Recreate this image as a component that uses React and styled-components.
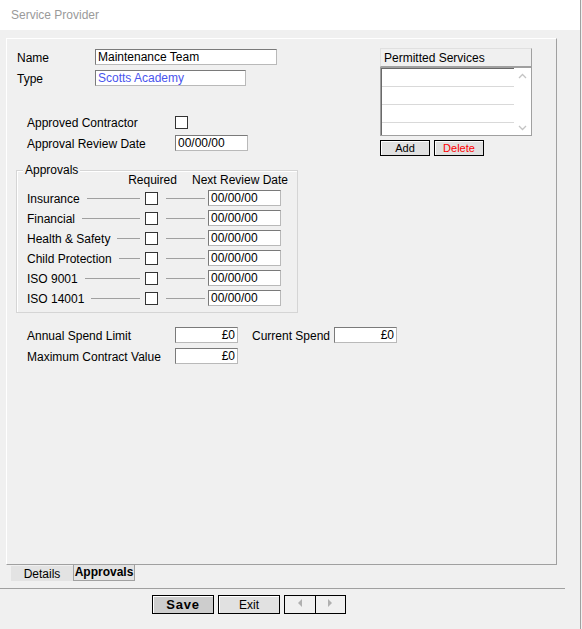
import React from 'react';
import styled, { createGlobalStyle } from 'styled-components';

const GlobalStyle = createGlobalStyle`
  body {
    margin: 0;
    background: #f0f0f0;
    font-family: "Liberation Sans", Arial, sans-serif;
    font-size: 12px;
    color: #000;
  }
`;

const Window = styled.div`
  width: 580px;
  height: 629px;
  border-right: 1px solid #a0a0a0;
  background: #f0f0f0;
  display: flex;
  flex-direction: column;
`;

const TitleBar = styled.div`
  height: 30px;
  line-height: 31px;
  padding-left: 11px;
  background: #fff;
  color: #9a9a9a;
  font-size: 12px;
`;

const Body = styled.div`
  padding: 8px 0 0 6px;
`;

const Panel = styled.div`
  box-sizing: border-box;
  width: 551px;
  height: 527px;
  border: 1px solid;
  border-color: #fff #a0a0a0 #a0a0a0 #fff;
  padding: 9px 0 0 9px;
  display: flex;
  align-items: flex-start;
`;

const LeftColumn = styled.div`
  width: 364px;
  display: flex;
  flex-direction: column;
`;

const Row = styled.div`
  display: flex;
  align-items: center;
  height: 16px;
  margin-top: ${(p) => p.$top || 0}px;
  padding-left: ${(p) => p.$indent || 0}px;
`;

const Label = styled.span`
  width: ${(p) => p.$w}px;
  flex: none;
  white-space: nowrap;
  padding-top: 1px;
`;

const Field = styled.input`
  box-sizing: border-box;
  width: ${(p) => p.$w}px;
  height: 16px;
  margin: 0;
  padding: 0 2px;
  border: 1px solid;
  border-color: #7a7a7a #b9b9b9 #b9b9b9 #7a7a7a;
  background: #fff;
  font-family: "Liberation Sans", Arial, sans-serif;
  font-size: 12px;
  color: ${(p) => p.$color || '#000'};
  text-align: ${(p) => (p.$right ? 'right' : 'left')};
  outline: none;
`;

const Check = styled.span`
  box-sizing: border-box;
  flex: none;
  width: 13px;
  height: 13px;
  border: 1px solid #333;
  background: #fff;
`;

const Group = styled.div`
  position: relative;
  box-sizing: border-box;
  width: 282px;
  height: 143px;
  margin-top: 19px;
  border: 1px solid #d5d5d5;
  box-shadow: inset 1px 1px #fff;
  padding: 0 0 0 10px;
`;

const Legend = styled.span`
  position: absolute;
  left: 6px;
  top: -8px;
  padding: 0 2px;
  background: #f0f0f0;
`;

const GroupHead = styled.div`
  display: flex;
  height: 17px;
  align-items: center;
  padding-left: 90px;
`;

const HeadCell = styled.span`
  width: ${(p) => p.$w}px;
  text-align: center;
  white-space: nowrap;
`;

const ApprovalRow = styled.div`
  display: flex;
  align-items: center;
  height: 20px;
`;

const LeadCell = styled.div`
  width: 113px;
  display: flex;
  align-items: center;
  white-space: nowrap;
  padding-top: 1px;
`;

const Rule = styled.span`
  flex: ${(p) => (p.$w ? 'none' : '1')};
  width: ${(p) => (p.$w ? `${p.$w}px` : 'auto')};
  height: 1px;
  background: #a0a0a0;
  margin-left: ${(p) => p.$left}px;
`;

const CheckCell = styled.div`
  margin-left: 5px;
  display: flex;
`;

const DateCell = styled.div`
  margin-left: 3px;
  display: flex;
`;

const RightColumn = styled.div`
  width: 152px;
  display: flex;
  flex-direction: column;
`;

const ListHeader = styled.div`
  box-sizing: border-box;
  height: 19px;
  line-height: 19px;
  padding-left: 3px;
  border: 1px solid;
  border-color: #e0e0e0 #a0a0a0 #a0a0a0 #e0e0e0;
`;

const ListBox = styled.div`
  box-sizing: border-box;
  height: 69px;
  border: 1px solid #a0a0a0;
  box-shadow: inset 1px 1px #696969;
  background: #fff;
  display: flex;
`;

const ListRows = styled.div`
  flex: 1;
  padding-top: 1px;
  padding-left: 1px;
`;

const ListRow = styled.div`
  height: 17px;
  border-bottom: 1px solid #d9d9d9;
`;

const ScrollBar = styled.div`
  width: 17px;
  display: flex;
  flex-direction: column;
  justify-content: space-between;
  align-items: center;
  padding: 5px 0 4px;
  background: #fff;
`;

const SmallButtons = styled.div`
  display: flex;
  gap: 4px;
  margin-top: 4px;
`;

const SmallButton = styled.button`
  box-sizing: border-box;
  width: 50px;
  height: 16px;
  padding: 0;
  border: 1px solid #000;
  background: #e1e1e1;
  box-shadow: inset 1px 1px #fff;
  font-family: "Liberation Sans", Arial, sans-serif;
  font-size: 11px;
  color: ${(p) => p.$color || '#000'};
`;

const Tabs = styled.div`
  display: flex;
  padding-left: 5px;
  align-items: flex-start;
`;

const Tab = styled.div`
  box-sizing: border-box;
  width: 62px;
  height: ${(p) => (p.$active ? 16 : 15)}px;
  margin-top: ${(p) => (p.$active ? 0 : 1)}px;
  line-height: ${(p) => (p.$active ? 14 : 17)}px;
  text-align: center;
  background: #e3e3e3;
  border: ${(p) => (p.$active ? '1px solid #a0a0a0' : 'none')};
  border-top: none;
  font-weight: ${(p) => (p.$active ? 'bold' : 'normal')};
`;

const Separator = styled.div`
  width: 565px;
  height: 1px;
  background: #a0a0a0;
  margin-top: 7px;
`;

const ActionBar = styled.div`
  display: flex;
  gap: 4px;
  padding: 6px 0 0 152px;
`;

const ActionButton = styled.button`
  box-sizing: border-box;
  width: 62px;
  height: 19px;
  padding: 0;
  border: 1px solid #000;
  background: ${(p) => (p.$primary ? '#cdcdcd' : '#e1e1e1')};
  box-shadow: inset 1px 1px #fff;
  font-family: "Liberation Sans", Arial, sans-serif;
  font-size: ${(p) => (p.$primary ? 13 : 12)}px;
  font-weight: ${(p) => (p.$primary ? 'bold' : 'normal')};
  letter-spacing: ${(p) => (p.$primary ? '0.8px' : '0')};
  color: #000;
`;

const NavGroup = styled.div`
  box-sizing: border-box;
  width: 62px;
  height: 19px;
  border: 1px solid #000;
  display: flex;
`;

const NavHalf = styled.div`
  flex: 1;
  display: flex;
  justify-content: center;
  align-items: flex-start;
  padding-top: 3px;
  & + & {
    border-left: 1px solid #000;
  }
`;

const Chevron = ({ down }) => (
  <svg width="9" height="6" viewBox="0 0 9 6">
    <polyline
      points={down ? '1,1 4.5,4.5 8,1' : '1,5 4.5,1.5 8,5'}
      fill="none"
      stroke="#c4c4c4"
      strokeWidth="1.3"
    />
  </svg>
);

const Arrow = ({ right }) => (
  <svg width="4" height="8" viewBox="0 0 4 8">
    <polygon points={right ? '0,0 4,4 0,8' : '4,0 0,4 4,8'} fill="#b0b0b0" />
  </svg>
);

const approvals = [
  'Insurance',
  'Financial',
  'Health & Safety',
  'Child Protection',
  'ISO 9001',
  'ISO 14001',
];

export default function App() {
  return (
    <>
      <GlobalStyle />
      <Window>
        <TitleBar>Service Provider</TitleBar>
        <Body>
          <Panel>
            <LeftColumn>
              <Row $top={1} $indent={1}>
                <Label $w={78}>Name</Label>
                <Field $w={182} readOnly defaultValue="Maintenance Team" />
              </Row>
              <Row $top={5} $indent={1}>
                <Label $w={78}>Type</Label>
                <Field $w={151} $color="#4a55ee" readOnly defaultValue="Scotts Academy" />
              </Row>
              <Row $top={28} $indent={11}>
                <Label $w={148}>Approved Contractor</Label>
                <Check />
              </Row>
              <Row $top={5} $indent={11}>
                <Label $w={148}>Approval Review Date</Label>
                <Field $w={73} readOnly defaultValue="00/00/00" />
              </Row>

              <Group>
                <Legend>Approvals</Legend>
                <GroupHead>
                  <HeadCell $w={71}>Required</HeadCell>
                  <HeadCell $w={104}>Next Review Date</HeadCell>
                </GroupHead>
                {approvals.map((name) => (
                  <ApprovalRow key={name}>
                    <LeadCell>
                      {name}
                      <Rule $left={7} />
                    </LeadCell>
                    <CheckCell>
                      <Check />
                    </CheckCell>
                    <Rule $left={8} $w={39} />
                    <DateCell>
                      <Field $w={73} readOnly defaultValue="00/00/00" />
                    </DateCell>
                  </ApprovalRow>
                ))}
              </Group>

              <Row $top={14} $indent={11}>
                <Label $w={148}>Annual Spend Limit</Label>
                <Field $w={63} $right readOnly defaultValue="£0" />
                <Label $w={82} style={{ marginLeft: 14 }}>Current Spend</Label>
                <Field $w={63} $right readOnly defaultValue="£0" />
              </Row>
              <Row $top={5} $indent={11}>
                <Label $w={148}>Maximum Contract Value</Label>
                <Field $w={63} $right readOnly defaultValue="£0" />
              </Row>
            </LeftColumn>

            <RightColumn>
              <ListHeader>Permitted Services</ListHeader>
              <ListBox>
                <ListRows>
                  <ListRow />
                  <ListRow />
                  <ListRow />
                </ListRows>
                <ScrollBar>
                  <Chevron />
                  <Chevron down />
                </ScrollBar>
              </ListBox>
              <SmallButtons>
                <SmallButton>Add</SmallButton>
                <SmallButton $color="#ff0000">Delete</SmallButton>
              </SmallButtons>
            </RightColumn>
          </Panel>
          <Tabs>
            <Tab>Details</Tab>
            <Tab $active>Approvals</Tab>
          </Tabs>
        </Body>
        <Separator />
        <ActionBar>
          <ActionButton $primary>Save</ActionButton>
          <ActionButton>Exit</ActionButton>
          <NavGroup>
            <NavHalf>
              <Arrow />
            </NavHalf>
            <NavHalf>
              <Arrow right />
            </NavHalf>
          </NavGroup>
        </ActionBar>
      </Window>
    </>
  );
}
